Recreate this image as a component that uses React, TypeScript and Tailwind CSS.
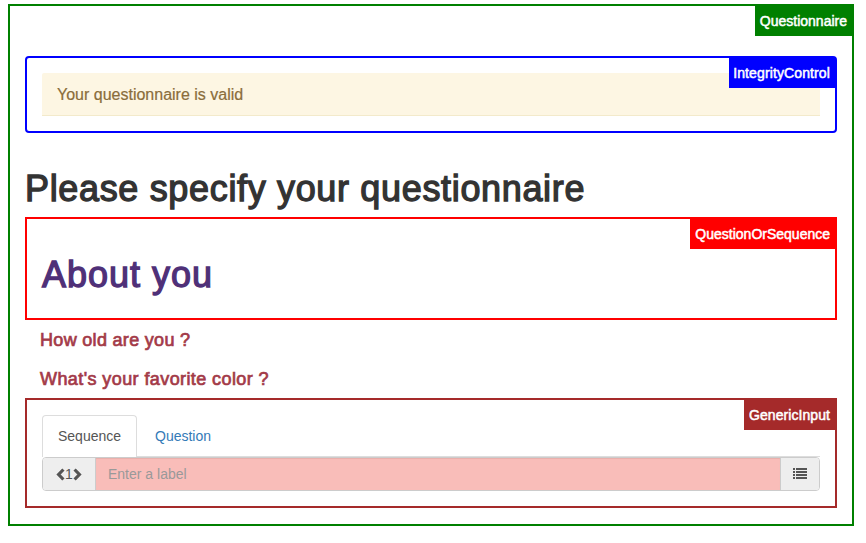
import type { ReactNode } from 'react';

type PanelProps = {
  name: string;
  className: string;
  tagClassName: string;
  children: ReactNode;
};

function Panel({ name, className, tagClassName, children }: PanelProps) {
  return (
    <section className={`relative border-2 px-[15px] ${className}`}>
      <span
        className={`absolute top-0 right-0 flex h-[30px] items-center justify-end pr-[5px] text-sm leading-5 whitespace-nowrap text-white [-webkit-text-stroke:0.5px_white] ${tagClassName}`}
      >
        {name}
      </span>
      {children}
    </section>
  );
}

function ChevronIcon({ flipped = false }: { flipped?: boolean }) {
  return (
    <svg viewBox="0 0 9 13" className={`h-[13px] w-[9px] ${flipped ? 'rotate-180' : ''}`}>
      <path d="M7.4 1.5 2.6 6.5l4.8 5" fill="none" stroke="#555" strokeWidth="3.2" />
    </svg>
  );
}

function ListIcon() {
  return (
    <svg viewBox="0 0 14 11" className="mb-px h-[11px] w-3.5" fill="#555" shapeRendering="crispEdges">
      {[0, 3, 6, 9].map((y) => (
        <g key={y}>
          <rect x="0" y={y} width="2" height="2" />
          <rect x="3" y={y} width="11" height="2" />
        </g>
      ))}
    </svg>
  );
}

export default function App() {
  return (
    <main className="h-[543px] w-[866px] bg-white pt-1 pl-2 font-['Liberation_Sans',Arial,sans-serif] text-sm text-[#333]">
      <Panel
        name="Questionnaire"
        className="h-[522px] w-[846px] border-[#008000] pt-[50px]"
        tagClassName="w-[97px] bg-[#008000]"
      >
        <Panel
          name="IntegrityControl"
          className="h-[77px] rounded border-[#0000ff] pt-[15px]"
          tagClassName="w-[106px] bg-[#0000ff] tracking-[0.12px]"
        >
          <div className="h-[43px] rounded-t-[2px] border-b border-[#f3eacb] bg-[#fdf6e3] px-[15px] text-base leading-[44px] text-[#8a6d3b] [-webkit-text-stroke:0.2px_#8a6d3b]">
            Your questionnaire is valid
          </div>
        </Panel>

        <h1 className="mt-[36px] h-[48px] text-4xl leading-[40px] tracking-[0.66px] whitespace-nowrap [-webkit-text-stroke:1.3px_#333]">
          Please specify your questionnaire
        </h1>

        <Panel
          name="QuestionOrSequence"
          className="h-[103px] border-[#ff0000] pt-[36px]"
          tagClassName="w-[145px] bg-[#ff0000]"
        >
          <h2 className="text-4xl leading-[40px] tracking-[1px] text-[#4f3078] [-webkit-text-stroke:1.3px_#4f3078]">
            About you
          </h2>
        </Panel>

        <div className="flex h-[78px] flex-col pt-px pl-[15px] text-lg leading-[39px] text-[#a33a48] [-webkit-text-stroke:0.7px_#a33a48]">
          <h3 className="tracking-[0.31px]">How old are you ?</h3>
          <h3 className="tracking-[0.41px]">What's your favorite color ?</h3>
        </div>

        <Panel
          name="GenericInput"
          className="h-[110px] border-[#a52a2a] pt-[15px]"
          tagClassName="w-[91px] bg-[#a52a2a] tracking-[0.07px]"
        >
          <nav className="flex h-[42px] border-b border-[#ddd] leading-5">
            <a className="h-[42px] w-[95px] rounded-t border border-b-0 border-[#ddd] bg-white pt-[10px] pl-[15px] text-[#555]">
              Sequence
            </a>
            <a className="pt-[11px] pl-[18px] text-[#337ab7]">Question</a>
          </nav>
          <div className="flex h-[34px] overflow-hidden rounded border border-[#ccc]">
            <div className="flex w-[53px] items-center justify-center border-r border-[#ccc] bg-[#eee] text-[#555]">
              <ChevronIcon />
              <span>1</span>
              <ChevronIcon flipped />
            </div>
            <div className="flex-1 bg-[#f9bdb9] pl-3 leading-8 text-[#999] shadow-[inset_0_1px_1px_rgba(0,0,0,0.075)]">
              Enter a label
            </div>
            <div className="flex w-[39px] items-center justify-center border-l border-[#ccc] bg-[#eee]">
              <ListIcon />
            </div>
          </div>
        </Panel>
      </Panel>
    </main>
  );
}
